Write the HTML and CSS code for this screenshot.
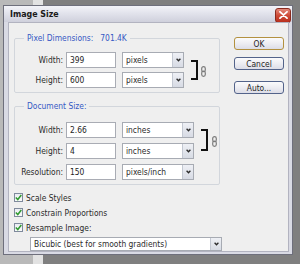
FILE: index.html
```html
<!DOCTYPE html>
<html>
<head>
<meta charset="UTF-8">
<title>Image Size</title>
<link rel="stylesheet" href="styles.css">
</head>
<body>
<div class="dialog">
  <div class="titlebar">
    <span class="title">Image Size</span>
    <span class="close">
      <svg width="9" height="8" viewBox="0 0 9 8"><path d="M1 0.8 L8 7.2 M8 0.8 L1 7.2" stroke="#fff" stroke-width="1.8" stroke-linecap="round"/></svg>
    </span>
  </div>
  <div class="client">
    <div class="main">
      <fieldset class="group">
        <legend>Pixel Dimensions:<span class="size">701.4K</span></legend>
        <div class="linked pixels">
          <div class="rows">
            <div class="row">
              <label>Width:</label>
              <input class="field" value="399">
              <div class="select">pixels<span class="arrow"><svg width="5" height="4" viewBox="0 0 5 4"><path d="M0.6 0.8 L2.5 2.8 L4.4 0.8" fill="none" stroke="#2a2a2a" stroke-width="1.3"/></svg></span></div>
            </div>
            <div class="row">
              <label>Height:</label>
              <input class="field" value="600">
              <div class="select">pixels<span class="arrow"><svg width="5" height="4" viewBox="0 0 5 4"><path d="M0.6 0.8 L2.5 2.8 L4.4 0.8" fill="none" stroke="#2a2a2a" stroke-width="1.3"/></svg></span></div>
            </div>
          </div>
          <div class="bracket"></div>
          <svg class="chain" width="5" height="11" viewBox="0 0 5 11"><rect x="0.7" y="0.7" width="3.6" height="5" rx="1.8" fill="none" stroke="#7c7c7c" stroke-width="1.2"/><rect x="0.7" y="5.2" width="3.6" height="5.1" rx="1.8" fill="none" stroke="#7c7c7c" stroke-width="1.2"/></svg>
        </div>
      </fieldset>

      <fieldset class="group doc">
        <legend>Document Size:</legend>
        <div class="linked document">
          <div class="rows">
            <div class="row">
              <label>Width:</label>
              <input class="field" value="2.66">
              <div class="select wide">inches<span class="arrow"><svg width="5" height="4" viewBox="0 0 5 4"><path d="M0.6 0.8 L2.5 2.8 L4.4 0.8" fill="none" stroke="#2a2a2a" stroke-width="1.3"/></svg></span></div>
            </div>
            <div class="row">
              <label>Height:</label>
              <input class="field" value="4">
              <div class="select wide">inches<span class="arrow"><svg width="5" height="4" viewBox="0 0 5 4"><path d="M0.6 0.8 L2.5 2.8 L4.4 0.8" fill="none" stroke="#2a2a2a" stroke-width="1.3"/></svg></span></div>
            </div>
            <div class="row">
              <label>Resolution:</label>
              <input class="field" value="150">
              <div class="select wide">pixels/inch<span class="arrow"><svg width="5" height="4" viewBox="0 0 5 4"><path d="M0.6 0.8 L2.5 2.8 L4.4 0.8" fill="none" stroke="#2a2a2a" stroke-width="1.3"/></svg></span></div>
            </div>
          </div>
          <div class="bracket"></div>
          <svg class="chain" width="5" height="11" viewBox="0 0 5 11"><rect x="0.7" y="0.7" width="3.6" height="5" rx="1.8" fill="none" stroke="#7c7c7c" stroke-width="1.2"/><rect x="0.7" y="5.2" width="3.6" height="5.1" rx="1.8" fill="none" stroke="#7c7c7c" stroke-width="1.2"/></svg>
        </div>
      </fieldset>

      <div class="checks">
        <div class="check"><span class="box"><svg width="7" height="7" viewBox="0 0 7 7"><path d="M0.8 3.4 L2.8 5.5 L6.3 1" fill="none" stroke="#2f9a2f" stroke-width="1.5"/></svg></span>Scale Styles</div>
        <div class="check"><span class="box"><svg width="7" height="7" viewBox="0 0 7 7"><path d="M0.8 3.4 L2.8 5.5 L6.3 1" fill="none" stroke="#2f9a2f" stroke-width="1.5"/></svg></span>Constrain Proportions</div>
        <div class="check"><span class="box"><svg width="7" height="7" viewBox="0 0 7 7"><path d="M0.8 3.4 L2.8 5.5 L6.3 1" fill="none" stroke="#2f9a2f" stroke-width="1.5"/></svg></span>Resample Image:</div>
      </div>
      <div class="select method">Bicubic (best for smooth gradients)<span class="arrow"><svg width="5" height="4" viewBox="0 0 5 4"><path d="M0.6 0.8 L2.5 2.8 L4.4 0.8" fill="none" stroke="#2a2a2a" stroke-width="1.3"/></svg></span></div>
    </div>

    <div class="buttons">
      <div class="btn default">OK</div>
      <div class="btn">Cancel</div>
      <div class="btn auto">Auto...</div>
    </div>
  </div>
</div>
</body>
</html>
```

FILE: styles.css
```css
* {
  box-sizing: border-box;
}
body {
  margin: 0;
  width: 300px;
  height: 264px;
  padding: 5px 0 0 3px;
  overflow: hidden;
  background: linear-gradient(to right, #b9b9b9 0 33px, #e2e2e2 33px 43px, #7f7f7f 43px);
  font-family: "DejaVu Sans Condensed", "DejaVu Sans", sans-serif;
  font-stretch: condensed;
  font-size: 8.4px;
  color: #2a2a2a;
}

/* window */
.dialog {
  width: 290px;
  height: 250px;
  border: 1px solid #6e6f7c;
  background: #d9dae4;
  padding: 0 3px 2px 4px;
  display: flex;
  flex-direction: column;
}
.titlebar {
  height: 16px;
  margin: 0 -3px 0 -4px;
  padding: 0 1px 0 6px;
  display: flex;
  align-items: center;
  justify-content: space-between;
  background: linear-gradient(#f3f3f8, #e2e3ec 45%, #cfd0dc);
}
.title {
  font-weight: bold;
  font-size: 8.8px;
  color: #1a1a1a;
}
.close {
  width: 16px;
  height: 15px;
  margin-top: 2px;
  border: 1px solid #8a2a1e;
  border-radius: 3px;
  background: linear-gradient(#e48a7c, #cf4a36 50%, #b9301e);
  display: flex;
  align-items: center;
  justify-content: center;
}

.client {
  flex: 1;
  display: flex;
  background: #efefef;
  border: 1px solid #b2b3c0;
  padding-left: 5px;
}
.main {
  width: 206px;
}

/* group boxes */
.group {
  margin: 10px 0 0;
  padding: 0 0 4px;
  min-width: 0;
  width: 206px;
  border: 1px solid #d2d6dc;
  border-radius: 2px;
}
.group.doc {
  margin-top: 8px;
}
legend {
  margin-left: 9px;
  padding: 0 3px;
  line-height: 11px;
  color: #3558c4;
}
.size {
  margin-left: 7px;
}

.linked {
  display: flex;
  align-items: flex-start;
}
.rows {
  display: flex;
  flex-direction: column;
  gap: 4px;
  margin-top: 8px;
}
.document .rows {
  gap: 5px;
  margin-top: 10px;
}
.row {
  display: flex;
  align-items: center;
  height: 16px;
}
.row label {
  width: 48px;
  text-align: right;
}
.field {
  margin: 0 0 0 3px;
  width: 50px;
  height: 16px;
  padding: 0 3px;
  border: 1px solid #a9acb4;
  background: #fff;
  font: inherit;
  color: #1e1e1e;
  outline: none;
}

/* drop-downs */
.select {
  margin-left: 6px;
  width: 62px;
  height: 16px;
  padding-left: 3px;
  border: 1px solid #a7abb3;
  background: #fff;
  display: flex;
  align-items: center;
  justify-content: space-between;
  white-space: nowrap;
}
.select.wide {
  width: 72px;
}
.arrow {
  width: 11px;
  height: 14px;
  border-left: 1px solid #c3c8d2;
  background: linear-gradient(#eef0f5, #d7dbe4);
  display: flex;
  align-items: center;
  justify-content: center;
}

.bracket {
  width: 7px;
  height: 20px;
  margin: 16px 0 0 7px;
  border: 2px solid #111;
  border-left: none;
}
.document .bracket {
  height: 22px;
  margin-top: 17px;
}
.chain {
  margin: 22px 0 0 3px;
}
.document .chain {
  margin: 24px 0 0 4px;
}

/* checkboxes */
.checks {
  margin-top: 5px;
}
.check {
  height: 15px;
  display: flex;
  align-items: center;
}
.box {
  width: 9px;
  height: 9px;
  margin-right: 3px;
  border: 1px solid #7f8a9c;
  background: linear-gradient(#e9ecf1, #fafafa);
  display: flex;
  align-items: center;
  justify-content: center;
}
.select.method {
  margin: 2px 0 0 16px;
  width: 192px;
  height: 14px;
}
.method .arrow {
  height: 12px;
}

/* buttons */
.buttons {
  margin: 14px 0 0 14px;
  display: flex;
  flex-direction: column;
}
.btn {
  width: 50px;
  height: 13px;
  margin-bottom: 7px;
  border: 1px solid #53638a;
  border-radius: 3px;
  background: linear-gradient(#fbfbfc, #ededf2 50%, #dcdde7);
  display: flex;
  align-items: center;
  justify-content: center;
  color: #1e1e1e;
}
.btn.default {
  border-color: #b3913f;
}
.btn.auto {
  margin-top: 4px;
}
```
